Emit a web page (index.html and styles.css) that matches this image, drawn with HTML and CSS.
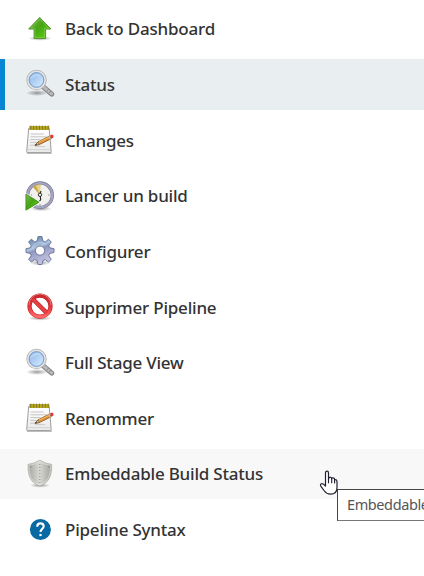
FILE: index.html
```html
<!DOCTYPE html>
<html lang="en">
<head>
<meta charset="utf-8">
<title>Pipeline</title>
<link rel="stylesheet" href="styles.css">
</head>
<body>
<svg class="defs" aria-hidden="true">
  <defs>
    <linearGradient id="green" x1="0" y1="0" x2="1" y2="1"><stop offset="0" stop-color="#86b957"/><stop offset=".45" stop-color="#45a514"/><stop offset="1" stop-color="#65d50d"/></linearGradient>
    <linearGradient id="lens" x1="0" y1="0" x2="1" y2="1"><stop offset="0" stop-color="#7dafe5"/><stop offset=".6" stop-color="#bcd8f7"/><stop offset="1" stop-color="#e3f1ff"/></linearGradient>
    <linearGradient id="gear" x1="0" y1="0" x2=".4" y2="1"><stop offset="0" stop-color="#4d6f9c"/><stop offset=".46" stop-color="#b0c4e0"/><stop offset=".54" stop-color="#8f97bf"/><stop offset="1" stop-color="#c6c3e0"/></linearGradient>
    <linearGradient id="red" x1="0" y1="0" x2="0" y2="1"><stop offset="0" stop-color="#c92a2c"/><stop offset=".5" stop-color="#df3439"/><stop offset="1" stop-color="#ff6969"/></linearGradient>
    <linearGradient id="shield" x1="0" y1="0" x2="1" y2="0"><stop offset="0" stop-color="#a3a49e"/><stop offset=".5" stop-color="#dadbd5"/><stop offset=".55" stop-color="#cfd1ca"/><stop offset="1" stop-color="#a0a29a"/></linearGradient>
    <linearGradient id="paper" x1="0" y1="0" x2="0" y2="1"><stop offset="0" stop-color="#fff"/><stop offset="1" stop-color="#e9e9e9"/></linearGradient>
    <radialGradient id="shadow"><stop offset="0" stop-color="#000" stop-opacity=".38"/><stop offset="1" stop-color="#000" stop-opacity="0"/></radialGradient>
    <symbol id="search" viewBox="0 0 32 32">
      <ellipse cx="13" cy="25" rx="11" ry="3" fill="url(#shadow)"/>
      <path d="M20 19.5L27.8 26.2" stroke="#858585" stroke-width="5" stroke-linecap="round"/>
      <path d="M20.2 19.5L27.6 25.8" stroke="#bababa" stroke-width="3" stroke-linecap="round"/>
      <path d="M22.7 23.3l1.9-2.3M25 25.2l1.9-2.3" stroke="#808080" stroke-width=".8"/>
      <circle cx="12.5" cy="12" r="8.8" fill="url(#lens)" stroke="#b0b0b0" stroke-width="2.8"/>
      <circle cx="12.5" cy="12" r="8.6" fill="none" stroke="#e4e4e4" stroke-width="1.6"/>
      <circle cx="12.5" cy="12" r="7.3" fill="none" stroke="#6e99d0" stroke-width=".9"/>
      <path d="M6 12a6.5 6.5 0 0 1 11-4.4C12 8 8 10 6 12z" fill="#fff" opacity=".25"/>
    </symbol>
    <symbol id="notepad" viewBox="0 0 32 32">
      <path d="M3 29.3h25" stroke="#999" stroke-opacity=".6" stroke-width="1.4"/>
      <path d="M4.7 4.3H25.2L27.2 27.6Q27.3 28.6 26.3 28.6H3.6Q2.5 28.6 2.7 27.6z" fill="url(#paper)" stroke="#929292" stroke-width=".9"/>
      <path d="M3.3 25.6h23.2" stroke="#ccc" stroke-width=".7"/>
      <path d="M5.3 2h20v4h-20z" fill="#b7a91f"/>
      <path d="M6.8 1.6v4.2M9.7 1.6v4.2M12.6 1.6v4.2M15.5 1.6v4.2M18.4 1.6v4.2M21.3 1.6v4.2M24.2 1.6v4.2" stroke="#7d7327" stroke-width=".9"/>
      <path d="M6.6 10h13M6.5 12.8h16M6.4 15.6h10M6.3 18.4h7M6.2 21.2h6" stroke="#b9b9b9" stroke-width=".8"/>
      <path d="M11 22.6h10" stroke="#ccc"/>
      <path d="M11.3 21.3L14 17.9 25.6 12 27.2 14.7 15.3 20.6z" fill="#df9439" stroke="#875019" stroke-width=".8"/>
      <path d="M11.3 21.3L14 17.9l1.3 2.7z" fill="#efd4a3" stroke="#6b4a25" stroke-width=".6"/>
      <path d="M11.1 21.5l1.9-1-.9-1z" fill="#222"/>
      <path d="M14.8 18.3l11.2-5.6" stroke="#ffc46b" stroke-width=".8"/>
      <path d="M24.8 12.3l1.5 3" stroke="#b8c0c7" stroke-width="1.5"/>
      <path d="M26 11.6l2-1q2.2.8 1.4 2.8l-2 1.3z" fill="#e73632"/>
    </symbol>
    <symbol id="clock" viewBox="0 0 32 32">
      <ellipse cx="17" cy="28.7" rx="11" ry="2.5" fill="url(#shadow)"/>
      <circle cx="16" cy="15.2" r="12.3" fill="#f1f1ed" stroke="#74748c" stroke-width="3.3"/>
      <circle cx="16" cy="15.2" r="12.2" fill="none" stroke="#a5a5c2" stroke-width="2.2"/>
      <path d="M15.8 15L8.7 6.8Q11.7 4 16.4 4.8z" fill="#c9aa45"/>
      <path d="M16 15L11.8 5.5l4.6-.7z" fill="#e6d38e"/>
      <path d="M15.6 14.5l1.5-3.5M16.2 15.5l.5 4-2.5 3.5" stroke="#222" stroke-width="1.1" fill="none"/>
      <circle cx="16" cy="14.8" r="1.7" fill="#eee" stroke="#222" stroke-width=".9"/>
      <path d="M24.2 15h1.4M16 24v1.5M7 15h1" stroke="#888"/>
      <path d="M1.6 13.4L16 22.2 1.6 31z" fill="url(#green)" stroke="#fff" stroke-width="1.2"/>
      <path d="M1.9 14L15.1 22.2 1.9 30.2z" fill="url(#green)" stroke="#398114" stroke-width=".7"/>
    </symbol>
  </defs>
</svg>
<nav class="tasks">
  <a class="task"><svg class="icon" viewBox="0 0 32 32">
    <ellipse cx="16" cy="25.4" rx="12" ry="2.4" fill="url(#shadow)"/>
    <path d="M15.7 4.5L26.8 16H21.6V25.4H10.1V16H4.7z" fill="url(#green)" stroke="#4b9423" stroke-width="1"/>
    <path d="M15.7 6L24.6 15.2H20.7V24.5H11V15.2H7z" fill="none" stroke="#b3df8c" stroke-opacity=".55" stroke-width=".7"/>
  </svg><span class="label">Back to Dashboard</span></a>
  <a class="task active"><svg class="icon"><use href="#search"/></svg><span class="label">Status</span></a>
  <a class="task"><svg class="icon"><use href="#notepad"/></svg><span class="label">Changes</span></a>
  <a class="task"><svg class="icon"><use href="#clock"/></svg><span class="label">Lancer un build</span></a>
  <a class="task"><svg class="icon" viewBox="0 0 32 32">
    <ellipse cx="16" cy="27.6" rx="11" ry="3" fill="url(#shadow)"/>
    <path fill-rule="evenodd" d="M13 6L14.1 1.5H17.9L19 6 21.2 7 24.5 4.2 27.3 7 24.8 10.6 25.8 12.8 30 13.7V17.5L25.8 18.4 24.8 20.8 27.3 24.3 24.5 27 21.2 24.5 19 25.3 17.9 29.5H14.1L13 25.3 10.8 24.5 7.3 27 4.6 24.3 7.2 20.8 6.2 18.4 2 17.5V13.7L6.2 12.8 7.2 10.6 4.6 7 7.3 4.2 10.8 7zM16 11a4.6 4.6 0 1 0 0 9.2 4.6 4.6 0 0 0 0-9.2z" fill="url(#gear)" stroke="#61719a" stroke-width=".9" stroke-linejoin="round"/>
    <path d="M7.7 14.5a8.5 8.5 0 0 1 14-5" fill="none" stroke="#c7d9ef" stroke-opacity=".5"/>
  </svg><span class="label">Configurer</span></a>
  <a class="task"><svg class="icon" viewBox="0 0 32 32">
    <ellipse cx="16" cy="27.2" rx="12" ry="2.5" fill="url(#shadow)"/>
    <circle cx="16" cy="15.2" r="10.5" fill="#fff" stroke="#c7262b" stroke-width="4.2"/>
    <path d="M8.8 8l14.4 14.4" stroke="#c7262b" stroke-width="4.4"/>
    <circle cx="16" cy="15.2" r="10.5" fill="none" stroke="url(#red)" stroke-width="3"/>
    <path d="M8.8 8l14.4 14.4" stroke="#e34144" stroke-width="3"/>
    <path d="M5 14a11 11 0 0 1 22 0" fill="none" stroke="#f08a8a" stroke-width=".8"/>
  </svg><span class="label">Supprimer Pipeline</span></a>
  <a class="task"><svg class="icon"><use href="#search"/></svg><span class="label">Full Stage View</span></a>
  <a class="task"><svg class="icon"><use href="#notepad"/></svg><span class="label">Renommer</span></a>
  <a class="task hover"><svg class="icon" viewBox="0 0 32 32">
    <ellipse cx="16" cy="27.4" rx="10" ry="2.4" fill="url(#shadow)"/>
    <path d="M15.8 2.2Q20.5 5.5 27.7 6.4 28 18 23.4 23.2 20.2 26.7 15.8 27.8 11.4 26.7 8.3 23.2 3.7 18 4 6.4 11 5.5 15.8 2.2z" fill="url(#shield)" stroke="#b7b9b2" stroke-width=".9"/>
    <path d="M15.8 3.6Q20.3 6.5 26.6 7.3 26.6 17.7 22.7 22.5 20 25.6 15.8 26.7 11.6 25.6 9 22.5 5 17.7 5 7.3 11.3 6.5 15.8 3.6z" fill="none" stroke="#eee" stroke-opacity=".65" stroke-width=".8"/>
    <path d="M15.8 6v19" stroke="#8f918a" stroke-width="1.1" stroke-dasharray="1 2"/>
    <path d="M6 8.8h1.2M24.3 8.8h1.2" stroke="#777"/>
  </svg><span class="label">Embeddable Build Status</span></a>
  <a class="task"><svg class="icon" viewBox="0 0 32 32">
    <circle cx="16.4" cy="15.5" r="10.5" fill="#0869a3"/>
    <path d="M13.2 12.8q0-3.4 3.3-3.4 3.2 0 3.2 2.9 0 1.4-1.7 2.8-1.5 1.2-1.5 2.9" fill="none" stroke="#fff" stroke-width="2.1"/>
    <path d="M15.4 19.9h2.2v2.2h-2.2z" fill="#fff"/>
  </svg><span class="label">Pipeline Syntax</span></a>
</nav>
<div class="tooltip">Embeddable</div>
<svg class="cursor" viewBox="0 0 20 26">
  <path d="M6.5 16V3Q6.5 1.2 8 1.2T9.5 3V9.2Q9.7 7.1 11.2 7.1T12.7 9Q13 7.5 14.4 7.8 15.7 8 15.6 10 18 8.9 18 12V17.5Q18 24.2 11.5 24.2 7.6 24.2 5.4 21L1.8 16.1Q.9 14.3 2.4 13.8 4 13.2 6.5 16z" fill="#fff" stroke="#22202e" stroke-width="1.2" stroke-linejoin="round"/>
  <path d="M9.5 9v4.2M12.7 9v4.2M15.6 10v3.5" stroke="#22202e" stroke-width="1.1"/>
</svg>
</body>
</html>
```
FILE: styles.css
```css
* { box-sizing: border-box; }
body {
  margin: 0;
  height: 576px;
  overflow: hidden;
  background: #fff;
  color: #333;
  font-family: "Noto Sans", "Open Sans", sans-serif;
}
.defs { position: absolute; width: 0; height: 0; }
.tasks {
  display: flex;
  flex-direction: column;
  gap: 5px;
  padding-top: 3.5px;
}
.task {
  display: flex;
  align-items: center;
  gap: 9px;
  height: 50.65px;
  padding-left: 24px;
  font-size: 17px;
  font-weight: 500;
  letter-spacing: -0.21px;
  line-height: 24px;
  white-space: nowrap;
}
.label { padding-top: 1px; }
.active { background: #e9eef1; box-shadow: inset 5px 0 #0785d3; }
.hover { background: #f8f8f8; }
.icon { width: 32px; height: 32px; flex: none; }
.tooltip {
  position: absolute;
  left: 337px;
  right: 0;
  top: 489px;
  height: 32px;
  padding-left: 9px;
  border: 1px solid #444;
  border-bottom-color: #777;
  border-right: 0;
  overflow: hidden;
  background: #fff;
  color: #555;
  font-size: 14.5px;
  letter-spacing: -0.4px;
  line-height: 29px;
  white-space: nowrap;
}
.cursor { position: absolute; left: 319px; top: 470px; width: 20px; height: 26px; }
```
